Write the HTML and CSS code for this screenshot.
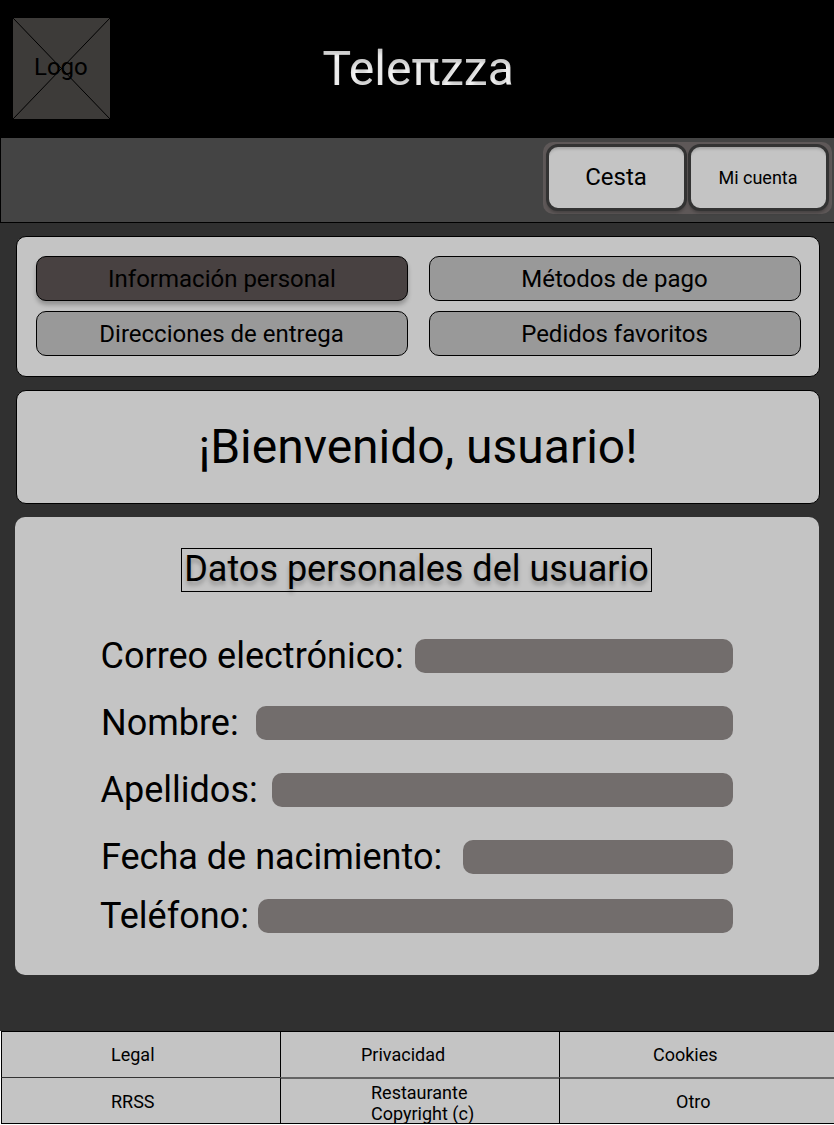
FILE: index.html
```html
<!DOCTYPE html>
<html lang="es">
<head>
<meta charset="utf-8">
<title>Teleπzza</title>
<link rel="stylesheet" href="styles.css">
</head>
<body>
<svg class="defs" width="0" height="0" aria-hidden="true">
  <filter id="inner-shadow" x="-5%" y="-20%" width="110%" height="150%" color-interpolation-filters="sRGB">
    <feOffset in="SourceAlpha" dx="0" dy="4" result="moved"/>
    <feGaussianBlur in="moved" stdDeviation="2" result="soft"/>
    <feComposite in="SourceAlpha" in2="soft" operator="out" result="edge"/>
    <feFlood flood-color="#000" flood-opacity="0.22"/>
    <feComposite in2="edge" operator="in" result="shade"/>
    <feMerge><feMergeNode in="SourceGraphic"/><feMergeNode in="shade"/></feMerge>
  </filter>
</svg>
<div class="page">
  <header class="header">
    <div class="logo">
      <svg class="logo-cross" viewBox="0 0 97 101"><path d="M0 0 97 101M97 0 0 101" stroke="#000" fill="none"/></svg>
      <span class="logo-text">Logo</span>
    </div>
    <h1 class="brand">Teleπzza</h1>
  </header>
  <nav class="nav">
    <div class="actions">
      <a class="action">Cesta</a>
      <a class="action action-small">Mi cuenta</a>
    </div>
  </nav>
  <main class="main">
    <section class="panel tabs">
      <a class="tab tab-active">Información personal</a>
      <a class="tab">Métodos de pago</a>
      <a class="tab">Direcciones de entrega</a>
      <a class="tab">Pedidos favoritos</a>
    </section>
    <section class="panel welcome">¡Bienvenido, usuario!</section>
    <section class="data">
      <h2 class="data-title">Datos personales del usuario</h2>
      <div class="row"><span class="label label-email">Correo electrónico:</span><span class="field"></span></div>
      <div class="row"><span class="label label-name">Nombre:</span><span class="field"></span></div>
      <div class="row"><span class="label label-surname">Apellidos:</span><span class="field"></span></div>
      <div class="row"><span class="label label-birth">Fecha de nacimiento:</span><span class="field"></span></div>
      <div class="row row-last"><span class="label label-phone">Teléfono:</span><span class="field"></span></div>
    </section>
  </main>
  <footer class="footer">
    <div class="cell"><span class="w-legal">Legal</span></div>
    <div class="cell"><span class="w-privacy">Privacidad</span></div>
    <div class="cell"><span class="w-cookies">Cookies</span></div>
    <div class="cell cell-low"><span class="w-legal">RRSS</span></div>
    <div class="cell cell-low"><span class="w-copy">Restaurante<br>Copyright (c)</span></div>
    <div class="cell cell-low"><span class="w-other">Otro</span></div>
  </footer>
</div>
</body>
</html>
```
FILE: styles.css
```css
* { box-sizing: border-box; }
body { margin: 0; background: #fff; color: #000; font-family: Roboto, sans-serif; overflow: hidden; }
.defs { position: absolute; }
.page { width: 834px; height: 1125px; display: flex; flex-direction: column; }
.header { height: 138px; flex: none; background: #000; display: grid; grid-template-columns: 98px 1fr; padding: 18px 0 0 13px; }
.logo { width: 97px; height: 101px; background: #3d3b39; display: grid; }
.logo-cross { grid-area: 1 / 1; width: 97px; height: 101px; }
.logo-text { grid-area: 1 / 1; font-size: 24px; line-height: 28px; margin-top: 35px; padding-left: 21px; }
.brand { margin: 23px 0 0 211px; font-size: 48px; line-height: 56px; font-weight: 400; color: #fff; filter: url(#inner-shadow); width: 200px; height: 64px; text-indent: 0.5px; }
.nav { height: 85px; flex: none; background: #444; border-left: 1px solid #000; border-bottom: 1px solid #000; display: flex; justify-content: flex-end; padding: 4px 2px 0 0; }
.actions { width: 289px; height: 72px; border-radius: 10px; background: #5e5858; padding: 2px 3px; display: flex; gap: 1px; }
.action { flex: none; width: 141px; height: 67px; border: 3px solid #333; border-radius: 12px; background: #c4c4c4; box-shadow: 0 3px 3px -1px rgba(0,0,0,.25), inset 0 4px 3px -2px rgba(0,0,0,.18); display: flex; align-items: center; justify-content: center; font-size: 24px; padding: 0 1px 1px 0; }
.action-small { font-size: 18px; padding: 0 1px 0 0; }
.main { height: 808px; flex: none; background: #303030; padding: 13px 14px 0 16px; }
.panel { background: #c4c4c4; border: 1px solid #000; border-radius: 10px; }
.tabs { height: 141px; padding: 19px 18px 0 19px; display: grid; grid-template-columns: 372px 372px; grid-template-rows: 45px 45px; column-gap: 21px; row-gap: 10px; }
.tab { background: #999; border: 1px solid #000; border-radius: 10px; display: flex; align-items: center; justify-content: center; font-size: 24px; line-height: 28px; padding-right: 1px; }
.tab-active { background: #484141; box-shadow: 0 4px 4px rgba(0,0,0,.25); padding-right: 0; }
.welcome { margin-top: 13px; height: 114px; font-size: 48px; line-height: 56px; padding: 28px 0 0 0; text-align: center; }
.data { margin: 13px 0 0 -1px; width: 804px; height: 458px; background: #c4c4c4; border-radius: 10px; padding: 31px 86px 0 86px; }
.data-title { margin: 0 0 47px 80px; width: 471px; height: 44px; border: 1px solid #000; font-size: 36px; line-height: 40px; font-weight: 400; text-align: center; white-space: nowrap; text-shadow: 0 4px 4px rgba(0,0,0,.25); }
.row { height: 34px; display: flex; margin-bottom: 33px; font-size: 36px; line-height: 34px; }
.row:nth-of-type(4) { margin-bottom: 25px; }
.label { flex: none; white-space: nowrap; }
.label-email { width: 314px; text-indent: -0.5px; }
.label-name { width: 155px; }
.label-surname { width: 171px; text-indent: -0.5px; }
.label-birth { width: 362px; }
.label-phone { width: 157px; text-indent: -1px; }
.field { flex: 1; background: #726d6c; border-radius: 10px; }
.footer { height: 93px; margin-left: 1px; flex: none; display: grid; grid-template-columns: 279px 279px 1fr; grid-template-rows: 46px 46px; border-bottom: 1px solid #000; background: #c4c4c4; }
.cell { border-left: 1px solid #000; border-top: 1px solid #000; font-size: 18px; line-height: 21px; padding-top: 12px; overflow: hidden; }
.cell-low { border-top-color: #333; padding-top: 13px; }
.cell-low:nth-child(n+5) { border-top-color: #646464; border-top-width: 2px; padding-top: 12px; }
.cell span { display: block; }
.w-legal { padding-left: 109px; }
.w-privacy { padding-left: 80px; }
.w-cookies { padding-left: 93px; }
.w-copy { padding-left: 90px; margin-top: -9px; }
.w-other { padding-left: 116px; }
```
